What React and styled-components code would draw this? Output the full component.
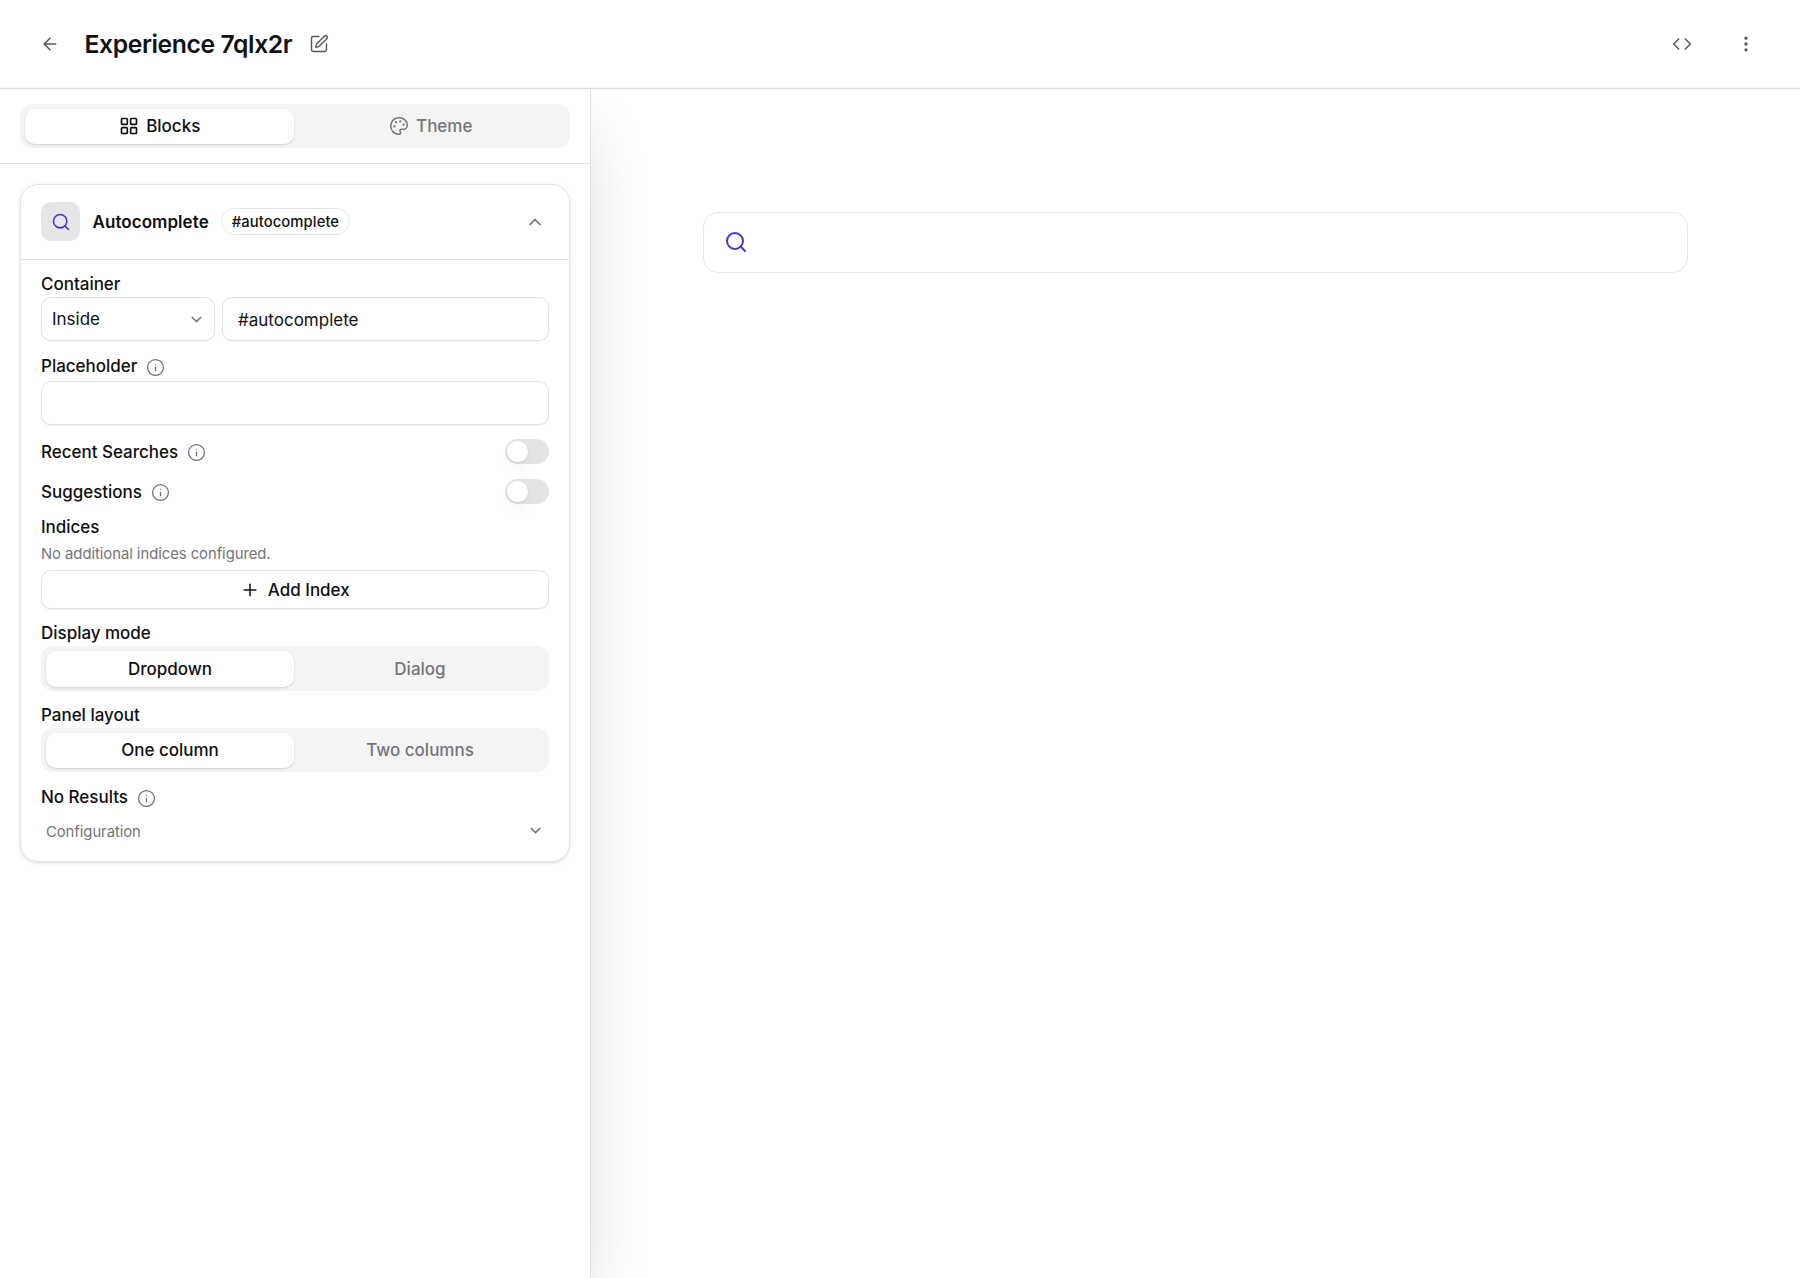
import React from "react";
import styled, { createGlobalStyle, css } from "styled-components";
import {
  ArrowLeft,
  SquarePen,
  Code,
  EllipsisVertical,
  LayoutGrid,
  Palette,
  Search,
  ChevronUp,
  ChevronDown,
  Info,
  Plus,
} from "lucide-react";

const Global = createGlobalStyle`
  *, *::before, *::after { box-sizing: border-box; }
  body { margin: 0; background: #fff; }
  button, input { font: inherit; letter-spacing: inherit; color: inherit; }
`;

const Page = styled.div`
  height: 1278px;
  display: flex;
  flex-direction: column;
  overflow: hidden;
  background: #fff;
  color: #0f0f12;
  font-family: Inter, "Liberation Sans", sans-serif;
  font-size: 17px;
  line-height: 24px;
  -webkit-font-smoothing: antialiased;
`;

const Header = styled.header`
  flex: none;
  height: 89px;
  padding: 0 44.5px 0 39.5px;
  display: flex;
  align-items: center;
  border-bottom: 1px solid #dcdcde;
  box-shadow: inset 0 -1px 0 #f1f1f2;
  color: #57575f;
`;

const IconButton = styled.button`
  flex: none;
  display: flex;
  padding: 0;
  border: 0;
  background: none;
  color: inherit;
`;

const PageTitle = styled.h1`
  margin: 0 17px 0 25px;
  font-size: 24.7px;
  line-height: 32px;
  font-weight: 600;
  letter-spacing: -0.4px;
  color: #111114;
`;

const Actions = styled.div`
  margin-left: auto;
  display: flex;
  gap: 44px;
`;

const Body = styled.div`
  flex: 1;
  min-height: 0;
  display: flex;
`;

const Sidebar = styled.aside`
  flex: none;
  width: 591px;
  border-right: 1px solid #e0e0e2;
  background: #fff;
  box-shadow: 0 31px 62px -15px rgba(0, 0, 0, 0.22);
  clip-path: inset(0 -100px 0 0);
`;

const TabStrip = styled.div`
  height: 75px;
  padding: 15px 20px 0;
  border-bottom: 1px solid #e4e4e7;
`;

const Segmented = styled.div`
  height: ${(p) => p.$height || 44}px;
  padding: 4.5px 3px 4.5px 5px;
  display: grid;
  grid-template-columns: calc(50% - 2px) 1fr;
  border-radius: 12px;
  background: #f4f4f5;
`;

const Segment = styled.button`
  display: flex;
  align-items: center;
  justify-content: center;
  gap: 7.5px;
  padding: 0;
  border: 0;
  border-radius: 10px;
  background: none;
  font-weight: 500;
  color: #747479;
  ${(p) =>
    p.$active &&
    css`
      background: #fff;
      color: #0f0f12;
      box-shadow: 0 1px 3px rgba(0, 0, 0, 0.1), 0 1px 2px rgba(0, 0, 0, 0.06);
    `}
`;

const Card = styled.section`
  height: 678px;
  margin: 20px 20px 0;
  border: 1px solid #e2e2e5;
  border-radius: 18px;
  box-shadow: 0 1px 4px rgba(0, 0, 0, 0.08), 0 1px 2px rgba(0, 0, 0, 0.08);
`;

const CardHeader = styled.div`
  height: 75px;
  padding: 0 24.5px 0 20px;
  display: flex;
  align-items: center;
  border-bottom: 1px solid #e4e4e7;
`;

const IconTile = styled.div`
  width: 39px;
  height: 39px;
  margin: 0 12.5px 1px 0;
  display: grid;
  place-items: center;
  border-radius: 10px;
  background: #e6e6e9;
  color: #4a35c8;
`;

const CardTitle = styled.h2`
  margin: 0 12px 0 0;
  font-size: 17px;
  line-height: 24px;
  font-weight: 600;
  letter-spacing: 0.06px;
`;

const Badge = styled.span`
  height: 27px;
  margin-bottom: 1px;
  padding: 1px 10px 0;
  border: 1px solid #e4e4e7;
  border-radius: 14px;
  font-size: 14.8px;
  line-height: 25px;
  font-weight: 500;
  letter-spacing: 0.08px;
`;

const Toggle = styled(IconButton)`
  margin-left: auto;
  color: #6b6b72;
`;

const CardBody = styled.div`
  padding: 12px 20px 0;
`;

const Field = styled.div`
  margin-bottom: ${(p) => p.$gap}px;
`;

const Label = styled.div`
  height: 24px;
  margin-bottom: ${(p) => p.$gap || 0}px;
  display: flex;
  align-items: center;
  gap: 9px;
  font-weight: 500;
  letter-spacing: -0.02px;

  svg {
    margin-top: 2px;
    color: #6e6e74;
  }
`;

const InputRow = styled.div`
  display: grid;
  grid-template-columns: 174px 1fr;
  gap: 7px;
`;

const fieldBox = css`
  height: 44px;
  border: 1px solid #e2e2e5;
  border-radius: 10px;
  background: #fff;
  box-shadow: 0 1px 2px rgba(0, 0, 0, 0.05);
`;

const Select = styled.button`
  ${fieldBox}
  padding: 0 9px 0 10px;
  display: flex;
  align-items: center;
  justify-content: space-between;

  svg {
    color: #7c7c82;
  }
`;

const TextInput = styled.input`
  ${fieldBox}
  display: block;
  width: 100%;
  padding: 1px 15px 0;
  outline: none;
`;

const SwitchRow = styled.div`
  height: 25px;
  margin-bottom: ${(p) => p.$gap}px;
  display: flex;
  align-items: center;
  justify-content: space-between;
`;

const Switch = styled.button`
  width: 44px;
  height: 25px;
  padding: 2px;
  border: 0;
  border-radius: 13px;
  background: #e4e4e7;

  &::before {
    content: "";
    display: block;
    width: 21px;
    height: 21px;
    border-radius: 50%;
    background: #fff;
    box-shadow: 0 12px 18px -4px rgba(0, 0, 0, 0.07), 0 2px 4px rgba(0, 0, 0, 0.06);
  }
`;

const Hint = styled.p`
  margin: 0 0 6px;
  font-size: 14.8px;
  line-height: 20px;
  letter-spacing: -0.03px;
  color: #747479;
`;

const AddButton = styled.button`
  ${fieldBox}
  width: 100%;
  height: 39px;
  display: flex;
  align-items: center;
  justify-content: center;
  gap: 7.5px;
  font-weight: 500;
`;

const Disclosure = styled.button`
  width: 100%;
  height: 30px;
  padding: 0 5px;
  display: flex;
  align-items: center;
  justify-content: space-between;
  border: 0;
  background: none;
  font-size: 14.8px;
  letter-spacing: -0.03px;
  color: #747479;

  svg {
    margin-bottom: 3px;
  }
`;

const Preview = styled.main`
  flex: 1;
  padding: 123px 112px 0;
`;

const SearchBox = styled.div`
  height: 61px;
  padding: 0 20px 1px;
  display: flex;
  align-items: center;
  border: 1px solid #e6e6e8;
  border-radius: 15px;
  color: #4a35c8;
`;

const InfoIcon = () => <Info size={19} strokeWidth={1.6} />;

export default function App() {
  return (
    <>
      <Global />
      <Page>
        <Header>
          <IconButton aria-label="Back">
            <ArrowLeft size={20} strokeWidth={1.75} />
          </IconButton>
          <PageTitle>Experience 7qlx2r</PageTitle>
          <IconButton aria-label="Rename">
            <SquarePen size={20} strokeWidth={1.7} />
          </IconButton>
          <Actions>
            <IconButton aria-label="Code">
              <Code size={20} strokeWidth={1.9} />
            </IconButton>
            <IconButton aria-label="More">
              <EllipsisVertical size={20} />
            </IconButton>
          </Actions>
        </Header>
        <Body>
          <Sidebar>
            <TabStrip>
              <Segmented>
                <Segment $active>
                  <LayoutGrid size={20} />
                  Blocks
                </Segment>
                <Segment>
                  <Palette size={20} strokeWidth={1.8} />
                  Theme
                </Segment>
              </Segmented>
            </TabStrip>
            <Card>
              <CardHeader>
                <IconTile>
                  <Search size={20} strokeWidth={1.9} />
                </IconTile>
                <CardTitle>Autocomplete</CardTitle>
                <Badge>#autocomplete</Badge>
                <Toggle aria-label="Collapse">
                  <ChevronUp size={20} />
                </Toggle>
              </CardHeader>
              <CardBody>
                <Field $gap={13}>
                  <Label $gap={1}>Container</Label>
                  <InputRow>
                    <Select>
                      Inside
                      <ChevronDown size={17} />
                    </Select>
                    <TextInput defaultValue="#autocomplete" />
                  </InputRow>
                </Field>
                <Field $gap={14}>
                  <Label $gap={3}>
                    Placeholder
                    <InfoIcon />
                  </Label>
                  <TextInput />
                </Field>
                <SwitchRow $gap={15}>
                  <Label>
                    Recent Searches
                    <InfoIcon />
                  </Label>
                  <Switch aria-label="Recent Searches" />
                </SwitchRow>
                <SwitchRow $gap={11}>
                  <Label>
                    Suggestions
                    <InfoIcon />
                  </Label>
                  <Switch aria-label="Suggestions" />
                </SwitchRow>
                <Field $gap={12}>
                  <Label $gap={5}>Indices</Label>
                  <Hint>No additional indices configured.</Hint>
                  <AddButton>
                    <Plus size={20} strokeWidth={1.8} />
                    Add Index
                  </AddButton>
                </Field>
                <Field $gap={12}>
                  <Label $gap={1}>Display mode</Label>
                  <Segmented $height={45}>
                    <Segment $active>Dropdown</Segment>
                    <Segment>Dialog</Segment>
                  </Segmented>
                </Field>
                <Field $gap={13}>
                  <Label $gap={1}>Panel layout</Label>
                  <Segmented>
                    <Segment $active>One column</Segment>
                    <Segment>Two columns</Segment>
                  </Segmented>
                </Field>
                <Label $gap={8}>
                  No Results
                  <InfoIcon />
                </Label>
                <Disclosure>
                  Configuration
                  <ChevronDown size={17} />
                </Disclosure>
              </CardBody>
            </Card>
          </Sidebar>
          <Preview>
            <SearchBox>
              <Search size={24} strokeWidth={2} />
            </SearchBox>
          </Preview>
        </Body>
      </Page>
    </>
  );
}
